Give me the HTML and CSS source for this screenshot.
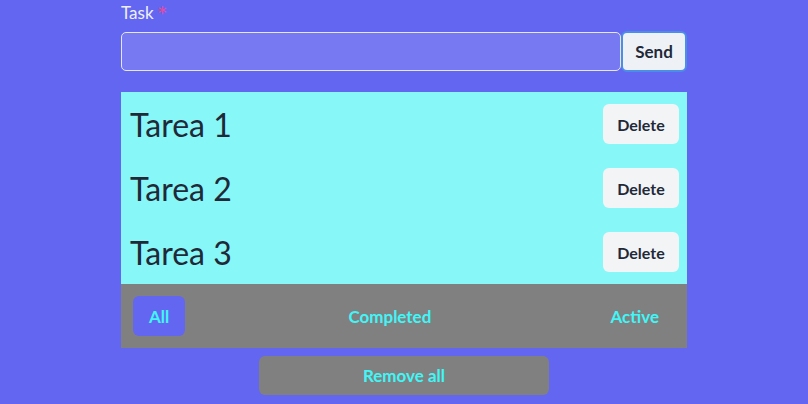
FILE: index.html
```html
<!DOCTYPE html>
<html>
<head>
<meta charset="utf-8">
<link rel="stylesheet" href="styles.css">
</head>
<body>
<div class="app">
  <form class="task-form">
    <label class="label">Task <span class="req">*</span></label>
    <div class="input-row">
      <input class="task-input" type="text">
      <button type="button" class="send">Send</button>
    </div>
  </form>
  <ul class="list">
    <li class="item"><span class="item-text">Tarea 1</span><button class="del">Delete</button></li>
    <li class="item"><span class="item-text">Tarea 2</span><button class="del">Delete</button></li>
    <li class="item"><span class="item-text">Tarea 3</span><button class="del">Delete</button></li>
  </ul>
  <div class="filters">
    <button class="filter active">All</button>
    <button class="filter">Completed</button>
    <button class="filter">Active</button>
  </div>
  <div class="remove-row">
    <button class="remove">Remove all</button>
  </div>
</div>
</body>
</html>
```
FILE: styles.css
```css
html, body {
  margin: 0;
  padding: 0;
  background: #6366f1;
  font-family: "Lato", "Noto Sans", sans-serif;
}
.app {
  width: 566px;
  margin: 0 auto;
}
.task-form {
  display: flex;
  flex-direction: column;
  gap: 7px;
  padding-top: 2px;
}
.label {
  display: block;
  height: 22px;
  color: #eef0f6;
  font-size: 17px;
  line-height: 22px;
}
.req {
  color: #ec4899;
  font-family: "DejaVu Sans", sans-serif;
  font-size: 17px;
  line-height: 1;
}
.input-row {
  display: flex;
  align-items: center;
}
.task-input {
  flex: 1;
  height: 39px;
  box-sizing: border-box;
  border: 1px solid #e5e7eb;
  border-radius: 5px;
  background: rgba(255, 255, 255, 0.13);
  outline: none;
}
.send {
  width: 66px;
  height: 41px;
  box-sizing: border-box;
  border: 2px solid #4a8ee8;
  border-radius: 6px;
  background: #eef2f7;
  color: #1f2937;
  font-family: inherit;
  font-weight: 700;
  font-size: 17px;
}
.list {
  list-style: none;
  margin: 20px 0 0;
  padding: 0;
  background: #87f7f7;
}
.item {
  display: flex;
  align-items: center;
  justify-content: space-between;
  height: 64px;
  padding: 0 8px 0 9px;
}
.item-text {
  font-size: 32px;
  color: #1f2937;
}
.del {
  width: 76px;
  height: 40px;
  border: none;
  border-radius: 6px;
  background: #f3f4f6;
  color: #1f2937;
  font-family: inherit;
  font-weight: 700;
  font-size: 16px;
}
.filters {
  display: flex;
  justify-content: space-between;
  align-items: center;
  background: #808080;
  height: 64px;
  padding: 0 12px;
}
.filter {
  height: 40px;
  padding: 0 16px;
  border: none;
  border-radius: 6px;
  background: transparent;
  color: #40f6f6;
  font-family: inherit;
  font-weight: 700;
  font-size: 17px;
}
.filter.active {
  background: #6366f1;
}
.remove-row {
  display: flex;
  justify-content: center;
  padding-top: 8px;
}
.remove {
  width: 290px;
  height: 39px;
  border: none;
  border-radius: 6px;
  background: #808080;
  color: #40f6f6;
  font-family: inherit;
  font-weight: 700;
  font-size: 17px;
}
```
